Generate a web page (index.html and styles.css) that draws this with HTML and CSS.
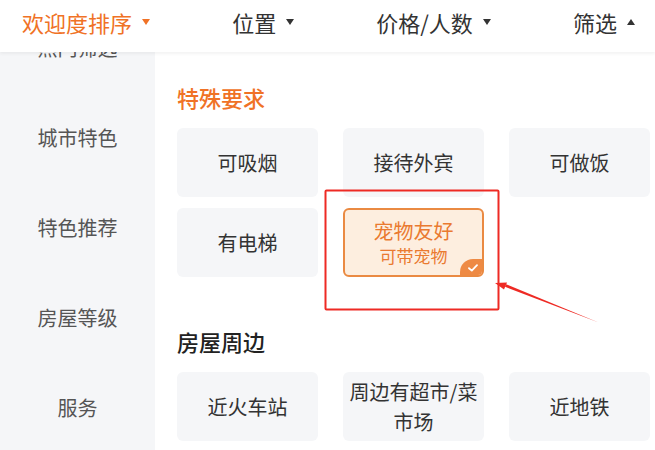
FILE: index.html
```html
<!DOCTYPE html>
<html lang="zh-CN">

<head>
    <meta charset="UTF-8">
    <meta name="viewport" content="width=device-width, initial-scale=1.0">
    <title>筛选</title>
    <link rel="stylesheet" href="styles.css">
</head>

<body>
    <div class="page">
        <!-- Sort / filter tabs -->
        <div class="topbar">
            <div class="tab active">欢迎度排序<span class="caret"></span></div>
            <div class="tab">位置<span class="caret"></span></div>
            <div class="tab">价格/人数<span class="caret"></span></div>
            <div class="tab">筛选<span class="caret up"></span></div>
        </div>

        <div class="main">
            <ul class="sidebar">
                <li>热门筛选</li>
                <li>城市特色</li>
                <li>特色推荐</li>
                <li>房屋等级</li>
                <li>服务</li>
            </ul>

            <div class="content">
                <h2 class="section-title orange">特殊要求</h2>
                <div class="options">
                    <div class="option">可吸烟</div>
                    <div class="option">接待外宾</div>
                    <div class="option">可做饭</div>
                    <div class="option">有电梯</div>
                    <div class="option selected">
                        <span class="name">宠物友好</span>
                        <span class="sub">可带宠物</span>
                        <span class="check">
                            <svg width="10" height="8" viewBox="0 0 10 8">
                                <path d="M1 4.2 L3.8 6.6 L9 1.2" fill="none" stroke="#fff" stroke-width="1.8" stroke-linecap="round" stroke-linejoin="round"/>
                            </svg>
                        </span>
                    </div>
                </div>

                <h2 class="section-title second">房屋周边</h2>
                <div class="options">
                    <div class="option">近火车站</div>
                    <div class="option">周边有超市/菜<br>市场</div>
                    <div class="option">近地铁</div>
                </div>
            </div>
        </div>

        <!-- annotation drawn on top of the screenshot -->
        <svg class="markup" width="655" height="450" viewBox="0 0 655 450">
            <rect x="325.5" y="190.5" width="173" height="119" fill="none" stroke="#ee2a24" stroke-width="2" rx="1"/>
            <polygon points="598,322.3 505,286.8 506,284.2" fill="#ee2a24"/>
            <polygon points="495,283 507,282.5 504,289.5" fill="#ee2a24"/>
        </svg>
    </div>
</body>

</html>
```

FILE: styles.css
```css
* {
    box-sizing: border-box;
}

body {
    margin: 0;
    font-family: "Noto Sans CJK SC", "Noto Sans", sans-serif;
    background-color: #fff;
    color: #333;
}

.page {
    position: relative;
    width: 655px;
    height: 450px;
    overflow: hidden;
}

.topbar {
    position: relative;
    z-index: 1;
    height: 52px;
    padding: 0 20px 8px 22px;
    display: flex;
    justify-content: space-between;
    align-items: center;
    background-color: #fff;
    box-shadow: 0 2px 3px rgba(0, 0, 0, 0.05);
}

.tab {
    display: flex;
    align-items: center;
    font-size: 22px;
    line-height: 1;
    color: #333;
}

.tab.active {
    color: #f07226;
}

.caret {
    margin-left: 10px;
    width: 0;
    height: 0;
    border-left: 4px solid transparent;
    border-right: 4px solid transparent;
    border-top: 6px solid currentColor;
}

.caret.up {
    border-top: none;
    border-bottom: 6px solid currentColor;
}

.main {
    display: flex;
    height: 398px;
    overflow: hidden;
}

.sidebar {
    width: 155px;
    flex-shrink: 0;
    margin: -50px 0 0 0;
    padding: 0;
    list-style: none;
    background-color: #f5f6f8;
}

.sidebar li {
    height: 90px;
    display: flex;
    align-items: center;
    justify-content: center;
    font-size: 20px;
    color: #555;
}

.content {
    flex: 1;
    padding: 30px 0 0 22px;
}

.section-title {
    margin: 0;
    font-size: 22px;
    line-height: 30px;
    font-weight: 500;
    color: #222;
}

.section-title.orange {
    color: #f07226;
}

.section-title.second {
    margin-top: 49px;
}

.options {
    margin-top: 16px;
    display: grid;
    grid-template-columns: repeat(3, 141px);
    column-gap: 25px;
    row-gap: 11px;
}

.option {
    position: relative;
    height: 69px;
    display: flex;
    flex-direction: column;
    align-items: center;
    justify-content: center;
    background-color: #f5f6f8;
    border-radius: 6px;
    font-size: 20px;
    line-height: 30px;
    color: #333;
    text-align: center;
    overflow: hidden;
}

.option.selected {
    background-color: #fdeedf;
    border: 2px solid #ea8a42;
    color: #ea7a30;
}

.option .name {
    font-size: 20px;
    line-height: 26px;
}

.option .sub {
    font-size: 17px;
    line-height: 23px;
}

.check {
    position: absolute;
    right: 0;
    bottom: 0;
    width: 22px;
    height: 16px;
    display: flex;
    align-items: center;
    justify-content: center;
    padding: 2px 0 0 3px;
    background-color: #ee8a44;
    border-top-left-radius: 13px;
}

.markup {
    position: absolute;
    top: 0;
    left: 0;
    pointer-events: none;
}
```
